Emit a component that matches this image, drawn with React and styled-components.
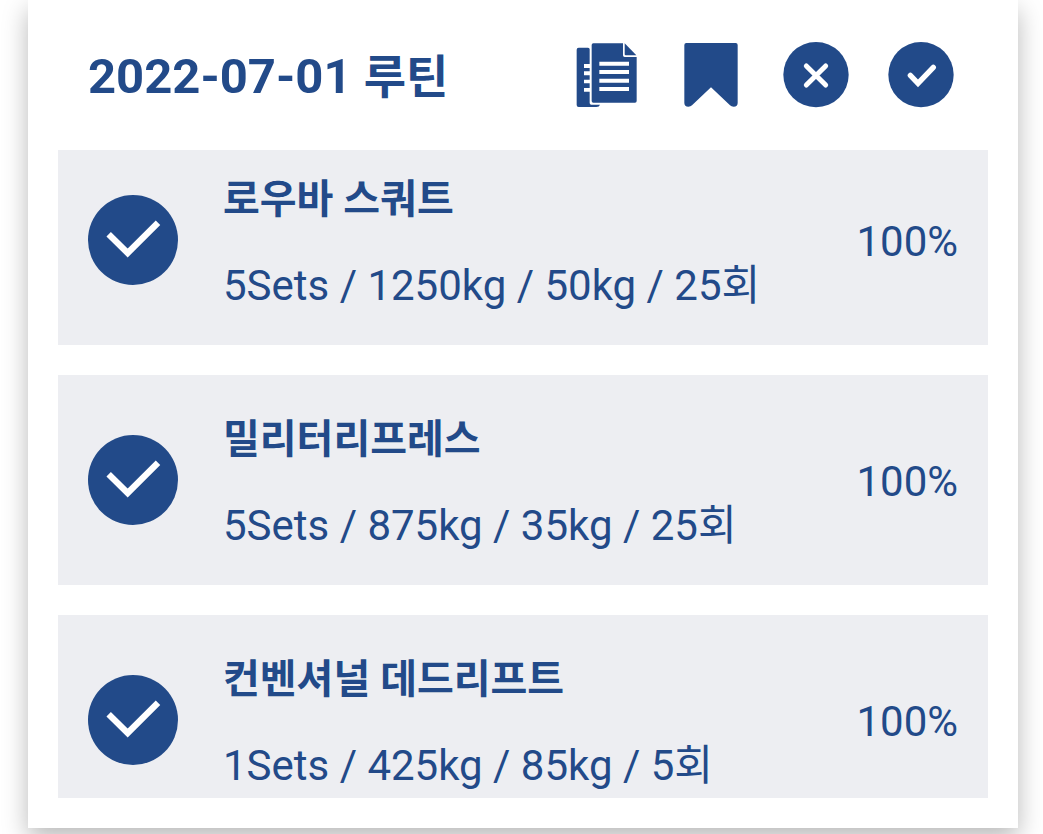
import React from "react";
import styled, { createGlobalStyle } from "styled-components";

const navy = "#224a89";

const GlobalStyle = createGlobalStyle`
  * { box-sizing: border-box; }
  body {
    margin: 0;
    background: #fff;
    color: ${navy};
    font-family: Roboto, "Noto Sans CJK KR", sans-serif;
  }
`;

const Page = styled.main`
  display: flex;
  height: 100vh;
  padding: 0 25px 6px 28px;
  overflow: hidden;
`;

const Card = styled.section`
  flex: 1;
  min-width: 0;
  display: flex;
  flex-direction: column;
  padding: 0 30px 30px;
  background: #fff;
  box-shadow: 0 10px 24px rgba(0, 0, 0, 0.28);
`;

const Header = styled.header`
  display: flex;
  align-items: center;
  justify-content: space-between;
  padding: 38px 30px 37px;
`;

const Title = styled.h1`
  margin: 0;
  padding-top: 3px;
  font-size: 49px;
  line-height: 72px;
  font-weight: 700;
  white-space: nowrap;
`;

const TitleLabel = styled.span`
  font-size: 46px;
`;

const Actions = styled.div`
  display: flex;
  gap: 30px;
`;

const IconButton = styled.button`
  width: 75px;
  height: 75px;
  padding: 0;
  border: 0;
  background: none;
  color: inherit;
  cursor: pointer;

  svg {
    display: block;
    width: 100%;
    height: 100%;
  }
`;

const List = styled.ul`
  flex: 1;
  min-height: 0;
  margin: 0;
  padding: 0;
  overflow: hidden;
  list-style: none;
  display: flex;
  flex-direction: column;
  gap: 30px;
`;

const Item = styled.li`
  flex: none;
  display: flex;
  align-items: center;
  gap: 45px;
  min-height: 210px;
  padding: 0 30px;
  background: #edeef2;

  &:first-child {
    margin-top: -15px;
  }
`;

const DoneMark = styled.svg`
  flex: none;
  width: 90px;
  height: 90px;
`;

const Info = styled.div`
  flex: 1;
  min-width: 0;
  display: flex;
  flex-direction: column;
  gap: 26px;
  padding-top: 6px;
  white-space: nowrap;
`;

const Name = styled.h2`
  margin: 0;
  font-size: 40px;
  line-height: 60px;
  font-weight: 700;
`;

const Detail = styled.p`
  margin: 0;
  font-size: 42px;
  line-height: 60px;
`;

const Percent = styled.span`
  padding-top: 4px;
  font-size: 42px;
  line-height: 60px;
`;

const exercises = [
  { name: "로우바 스쿼트", detail: "5Sets / 1250kg / 50kg / 25회", percent: "100%" },
  { name: "밀리터리프레스", detail: "5Sets / 875kg / 35kg / 25회", percent: "100%" },
  { name: "컨벤셔널 데드리프트", detail: "1Sets / 425kg / 85kg / 5회", percent: "100%" },
];

function NotesIcon() {
  return (
    <svg viewBox="24 39 225 225" aria-hidden="true">
      <path
        fill={navy}
        d="M56 68H84Q89 68 89 73V117H72V129H89V139H72V151H89V164H72V175H89V189H72V200H89V234Q89 239 94 239H120Q118 246 109 246H56Q50 246 50 240V74Q50 68 56 68Z"
      />
      <path
        fill={navy}
        d="M100 55H189V91Q189 96 194 96H230V228Q230 233 225 233H100Q95 233 95 228V60Q95 55 100 55Z"
      />
      <path fill={navy} d="M194 55L229 91H197Q194 91 194 88Z" />
      <path stroke="#fff" strokeWidth="12" d="M118 116H207M118 141H207M118 167H207M118 192H207" />
    </svg>
  );
}

function BookmarkIcon() {
  return (
    <svg viewBox="339 39 225 225" aria-hidden="true">
      <path
        fill={navy}
        d="M379 54H527Q533 54 533 60V234Q533 245 521 245Q514 245 510 241L453 187L396 241Q392 245 385 245Q373 245 373 234V60Q373 54 379 54Z"
      />
    </svg>
  );
}

function CancelIcon() {
  return (
    <svg viewBox="24 39 225 225" aria-hidden="true">
      <circle cx="138" cy="149" r="98" fill={navy} />
      <path
        fill="none"
        stroke="#fff"
        strokeWidth="15"
        strokeLinecap="round"
        d="M109 123L167 180M167 123L109 180"
      />
    </svg>
  );
}

function ConfirmIcon() {
  return (
    <svg viewBox="339 39 225 225" aria-hidden="true">
      <circle cx="453" cy="149" r="98" fill={navy} />
      <path
        fill="none"
        stroke="#fff"
        strokeWidth="16"
        strokeLinecap="round"
        d="M421 151L444 175L490 127"
      />
    </svg>
  );
}

const actions = [
  { label: "메모", Icon: NotesIcon },
  { label: "북마크", Icon: BookmarkIcon },
  { label: "취소", Icon: CancelIcon },
  { label: "완료", Icon: ConfirmIcon },
];

export default function App() {
  return (
    <>
      <GlobalStyle />
      <Page>
        <Card>
          <Header>
            <Title>
              2022-07-01 <TitleLabel>루틴</TitleLabel>
            </Title>
            <Actions>
              {actions.map(({ label, Icon }) => (
                <IconButton key={label} type="button" aria-label={label}>
                  <Icon />
                </IconButton>
              ))}
            </Actions>
          </Header>
          <List>
            {exercises.map(({ name, detail, percent }) => (
              <Item key={name}>
                <DoneMark viewBox="0 0 270 270" aria-hidden="true">
                  <circle cx="135" cy="135" r="135" fill={navy} />
                  <path fill="none" stroke="#fff" strokeWidth="19" d="M62 118L119 174L210 83" />
                </DoneMark>
                <Info>
                  <Name>{name}</Name>
                  <Detail>{detail}</Detail>
                </Info>
                <Percent>{percent}</Percent>
              </Item>
            ))}
          </List>
        </Card>
      </Page>
    </>
  );
}
